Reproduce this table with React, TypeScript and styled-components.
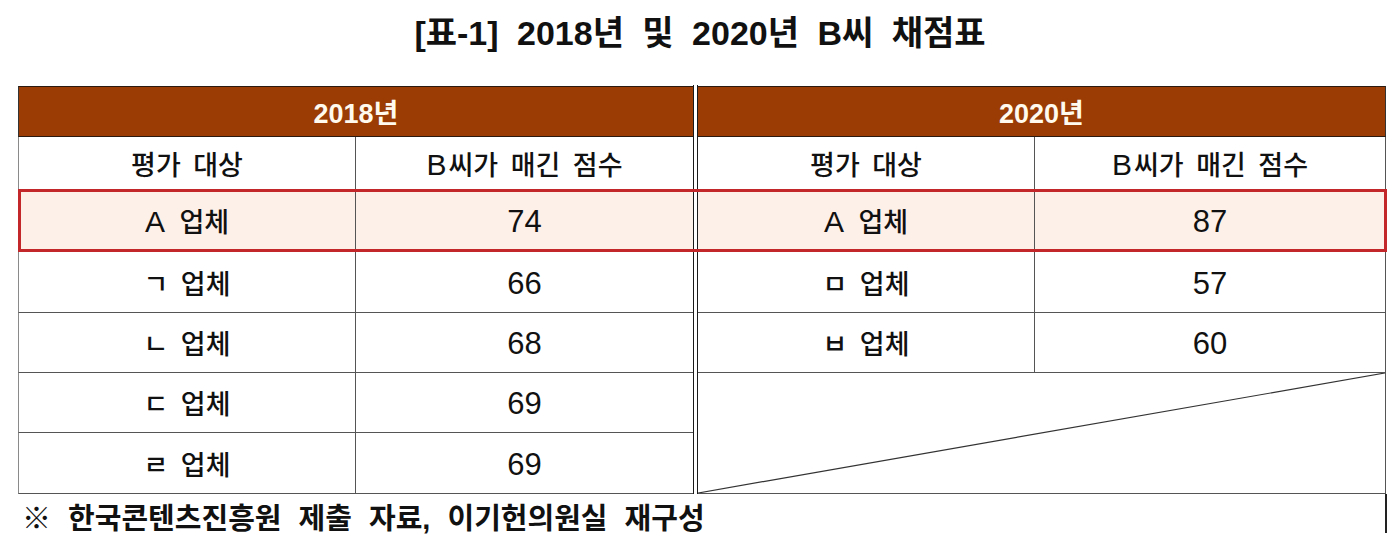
import styled, { createGlobalStyle } from 'styled-components';

const GlobalStyle = createGlobalStyle`
    html, body {
        margin: 0;
        padding: 0;
        background: #ffffff;
    }
    body {
        font-family: "Liberation Sans", "Noto Sans CJK KR", sans-serif;
        color: #111111;
    }
`;

const Page = styled.div`
    width: 1400px;
    height: 554px;
    overflow: hidden;
    background: #ffffff;
`;

const Title = styled.h1`
    box-sizing: border-box;
    height: 86px;
    margin: 0;
    padding-top: 11px;
    font-family: "Liberation Sans", "Noto Sans CJK KR", sans-serif;
    font-size: 34px;
    font-weight: 700;
    line-height: 44px;
    word-spacing: 9px;
    text-align: center;
    color: #111111;
`;

const Grid = styled.div`
    display: grid;
    margin-left: 18px;
    width: 1368px;
    grid-template-columns: 338px 337px 5px 337px 351px;
    grid-template-rows: 51px 53px 62px 61px 60px 60px 61px;
`;

const YearCell = styled.div<{ $edge?: boolean }>`
    box-sizing: border-box;
    grid-column: span 2;
    display: flex;
    align-items: center;
    justify-content: center;
    background: #9a3c04;
    color: #fff9ee;
    font-size: 27px;
    font-weight: 700;
    border-top: 1.5px solid #2a1a10;
    border-bottom: 1.5px solid #2a1a10;
    border-left: ${({ $edge }) => ($edge ? '1px solid #333' : 'none')};
    border-right: ${({ $edge }) => ($edge ? 'none' : '1px solid #333')};
`;

const Spacer = styled.div`
    grid-column: 3;
    grid-row: 1 / -1;
    border-left: 1.5px solid #1a1a1a;
    border-right: 1.5px solid #1a1a1a;
    background: #ffffff;
    margin-top: -1px;
`;

type CellProps = { $first?: boolean; $last?: boolean; $hl?: boolean; $col?: number };

const Cell = styled.div<CellProps>`
    box-sizing: border-box;
    display: flex;
    align-items: center;
    justify-content: center;
    font-size: 27px;
    font-weight: 500;
    word-spacing: 5px;
    color: #111111;
    background: ${({ $hl }) => ($hl ? '#fdf0e9' : '#ffffff')};
    border-bottom: 1px solid #555555;
    border-left: ${({ $first }) => ($first ? '1px solid #8a8a8a' : 'none')};
    border-right: ${({ $last }) => ($last ? 'none' : '1px solid #555555')};
    ${({ $hl, $col }) => ($hl && $col ? `grid-row: 3; grid-column: ${$col};` : '')}
`;

const Num = styled.span`
    font-family: "Liberation Sans", sans-serif;
    font-size: 31px;
    font-weight: 400;
    padding-top: 3px;
`;

const Latin = styled.span`
    font-family: "Liberation Sans", sans-serif;
    font-size: 30px;
    margin-right: 2px;
`;

const Band = styled.div`
    grid-column: 1 / -1;
    grid-row: 3;
    border: 3px solid #c4272a;
    margin: -1px -1px 0 0;
    z-index: 2;
    pointer-events: none;
`;

const EmptyCell = styled.div`
    box-sizing: border-box;
    grid-column: 4 / span 2;
    grid-row: 6 / span 2;
    border-right: 1px solid #555555;
    border-bottom: 1px solid #555555;

    svg {
        display: block;
        width: 100%;
        height: 100%;
    }
`;

const Footer = styled.div`
    box-sizing: border-box;
    display: flex;
    align-items: center;
    margin-left: 18px;
    width: 1369px;
    height: 39px;
    padding-left: 4px;
    padding-top: 5px;
    border-right: 2px solid #222222;
    font-size: 29px;
    font-weight: 700;
    word-spacing: 9px;
    white-space: nowrap;
    color: #111111;
`;

type Row = { name: string; mark?: string; score: string };

const left: Row[] = [
    { mark: 'A', name: '업체', score: '74' },
    { name: 'ㄱ 업체', score: '66' },
    { name: 'ㄴ 업체', score: '68' },
    { name: 'ㄷ 업체', score: '69' },
    { name: 'ㄹ 업체', score: '69' },
];

const right: Row[] = [
    { mark: 'A', name: '업체', score: '87' },
    { name: 'ㅁ 업체', score: '57' },
    { name: 'ㅂ 업체', score: '60' },
];

const NameText = ({ row }: { row: Row }) => (
    <span>
        {row.mark && <Latin>{row.mark}</Latin>} {row.name}
    </span>
);

const App = () => {
    const cells = [];
    for (let i = 0; i < 5; i++) {
        const hl = i === 0;
        cells.push(
            <Cell key={`l-n-${i}`} $first $hl={hl} $col={1}><NameText row={left[i]} /></Cell>,
            <Cell key={`l-s-${i}`} $last $hl={hl} $col={2}><Num>{left[i].score}</Num></Cell>
        );
        if (i < 3) {
            cells.push(
                <Cell key={`r-n-${i}`} $hl={hl} $col={4}><NameText row={right[i]} /></Cell>,
                <Cell key={`r-s-${i}`} $hl={hl} $col={5}><Num>{right[i].score}</Num></Cell>
            );
        }
    }

    return (
        <Page>
            <GlobalStyle />
            <Title>[표-1] 2018년 및 2020년 B씨 채점표</Title>
            <Grid>
                <Spacer />
                <YearCell $edge>2018년</YearCell>
                <YearCell>2020년</YearCell>
                <Cell $first>평가 대상</Cell>
                <Cell $last><span><Latin>B</Latin>씨가 매긴 점수</span></Cell>
                <Cell>평가 대상</Cell>
                <Cell><span><Latin>B</Latin>씨가 매긴 점수</span></Cell>
                {cells}
                <EmptyCell>
                    <svg viewBox="0 0 100 100" preserveAspectRatio="none">
                        <line x1="0" y1="100" x2="100" y2="0" stroke="#333" strokeWidth="1.2" vectorEffect="non-scaling-stroke" />
                    </svg>
                </EmptyCell>
                <Band />
            </Grid>
            <Footer>※ 한국콘텐츠진흥원 제출 자료, 이기헌의원실 재구성</Footer>
        </Page>
    );
};

export default App;
